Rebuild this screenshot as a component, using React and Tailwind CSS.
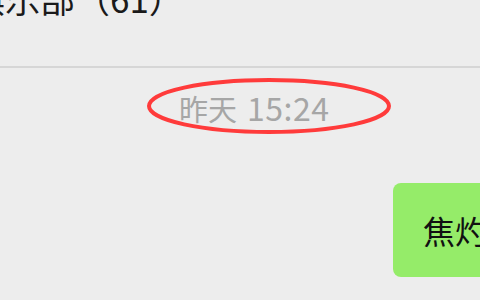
export default function App() {
  const font = { fontFamily: '"Noto Sans CJK SC", "Microsoft YaHei", sans-serif' };
  return (
    <div className="w-[480px] h-[300px] bg-[#ededed] overflow-hidden" style={font}>
      <div className="h-[68px] border-b-2 border-[#d6d6d6] overflow-hidden">
        <div className="-mt-[24px] -ml-[30px] text-[35px] leading-[44px] text-[#1a1a1a] whitespace-nowrap">
          俱乐部（61）
        </div>
      </div>
      <div className="pl-[179px] pt-[20px] relative h-[48px]">
        <span className="flex items-baseline whitespace-nowrap text-[#a6a6a6] leading-[38px]">
          <span className="text-[29px]">昨天</span>
          <span className="text-[32px] ml-[10px] tracking-[0.5px]">15:24</span>
        </span>
        <svg className="absolute left-[146px] top-[8px]" width="246" height="60" viewBox="0 0 246 60">
          <ellipse cx="123" cy="30" rx="120" ry="26" fill="none" stroke="#ff3b3b" strokeWidth="4" />
        </svg>
      </div>
      <div className="flex pl-[393px] pt-[67px]">
        <div className="w-[140px] h-[94px] shrink-0 rounded-[8px] bg-[#95ec69] flex items-center pl-[30px]">
          <span className="text-[32px] leading-[40px] text-[#111] whitespace-nowrap">焦灼</span>
        </div>
      </div>
    </div>
  );
}
